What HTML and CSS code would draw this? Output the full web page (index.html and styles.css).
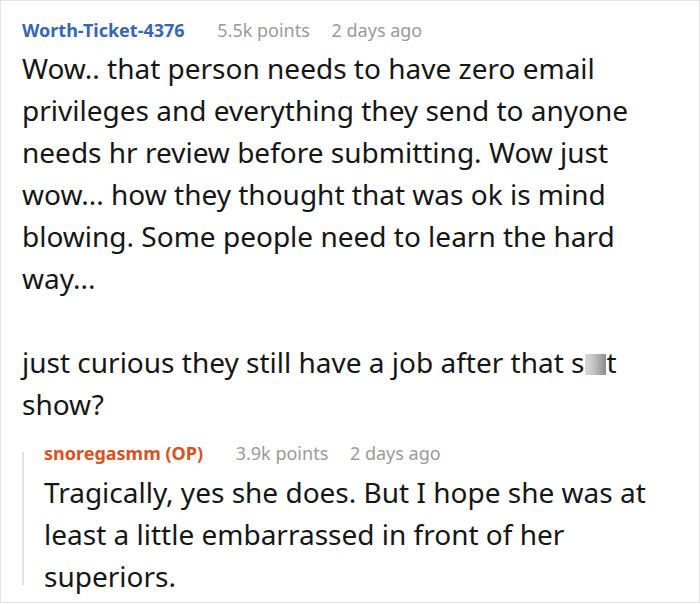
FILE: index.html
```html
<!DOCTYPE html>
<html>
<head>
<meta charset="utf-8">
<link rel="stylesheet" href="styles.css">
</head>
<body>
<div class="card">
  <div class="comment">
    <div class="meta">
      <span class="author author-blue">Worth-Ticket-4376</span>
      <span class="points">5.5k points</span>
      <span class="time">2 days ago</span>
    </div>
    <div class="body">
      <p>Wow.. that person needs to have zero email privileges and everything they send to anyone needs hr review before submitting. Wow just wow... how they thought that was ok is mind blowing. Some people need to learn the hard way...</p>
      <p>just curious they still have a job after that s<span class="censor"></span>t show?</p>
    </div>
    <div class="reply">
      <div class="meta">
        <span class="author author-op">snoregasmm (OP)</span>
        <span class="points">3.9k points</span>
        <span class="time">2 days ago</span>
      </div>
      <div class="body">
        <p>Tragically, yes she does. But I hope she was at least a little embarrassed in front of her superiors.</p>
      </div>
    </div>
  </div>
</div>
</body>
</html>
```

FILE: styles.css
```css
html, body {
  margin: 0;
  padding: 0;
  background: #ffffff;
}

.card {
  box-sizing: border-box;
  width: 700px;
  height: 603px;
  border: 1px solid #e4e4e4;
  overflow: hidden;
  font-family: "Noto Sans", "Open Sans", sans-serif;
  color: #161616;
}

.comment {
  padding: 17px 30px 0 21px;
}

.meta {
  font-size: 18px;
  line-height: 24px;
  white-space: nowrap;
}

.author {
  font-weight: 700;
}

.author-blue {
  color: #3567b4;
}

.author-op {
  color: #d9511c;
}

.points {
  color: #9a9a9a;
  margin-left: 28px;
}

.time {
  color: #9a9a9a;
  margin-left: 17px;
}

.body {
  font-size: 28px;
  line-height: 42px;
  margin-top: 5px;
}

.body p {
  margin: 0 0 42px 0;
}

.body p:last-child {
  margin-bottom: 0;
}

.censor {
  display: inline-block;
  width: 21px;
  height: 21px;
  margin-left: 1px;
  vertical-align: -2px;
  background: linear-gradient(to right, #dadada 0%, #c4c4c4 40%, #8c8c8c 100%);
}

.reply {
  position: relative;
  margin-top: 16px;
  padding-left: 22px;
  height: 144px;
}

.reply::before {
  content: "";
  position: absolute;
  left: 0;
  top: 11px;
  bottom: 0;
  width: 2px;
  background: #e2e2e2;
}

.reply .body {
  margin-top: 6px;
}
```
